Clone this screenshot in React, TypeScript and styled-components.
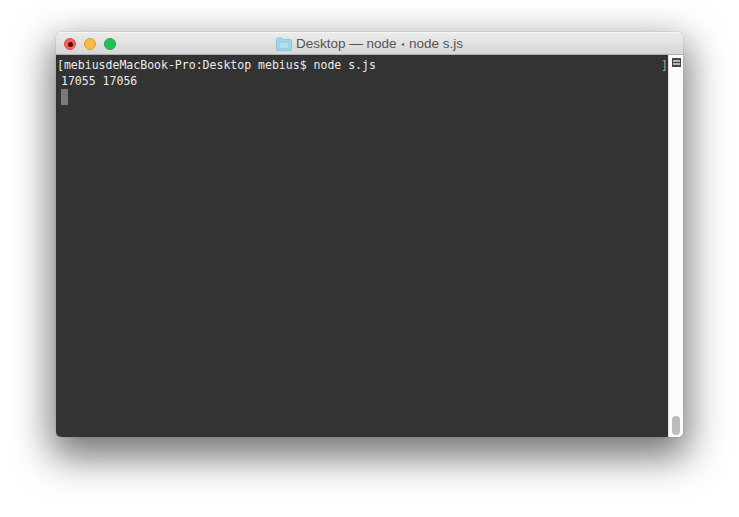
import React from "react";
import styled, { createGlobalStyle } from "styled-components";

const Global = createGlobalStyle`
  html, body {
    margin: 0;
    padding: 0;
    background: #fff;
    overflow: hidden;
  }
`;

const Page = styled.div`
  width: 739px;
  height: 517px;
  padding: 32px 56px 80px;
  box-sizing: border-box;
`;

const Window = styled.div`
  width: 627px;
  height: 405px;
  border-radius: 5px;
  overflow: hidden;
  display: flex;
  flex-direction: column;
  box-shadow: 0 0 1px rgba(0, 0, 0, 0.5), 0 15px 38px 5px rgba(0, 0, 0, 0.55);
`;

const TitleBar = styled.div`
  position: relative;
  height: 23px;
  flex: none;
  display: flex;
  align-items: center;
  justify-content: center;
  gap: 4px;
  background: linear-gradient(#ebebeb, #d6d6d6);
  border-top: 1px solid #f6f6f6;
  border-bottom: 1px solid #b0b0b0;
  box-sizing: border-box;
`;

const Lights = styled.div`
  position: absolute;
  left: 8px;
  top: 5px;
  display: flex;
  gap: 8px;
`;

const Light = styled.span<{ $color: string; $edge: string }>`
  width: 12px;
  height: 12px;
  border-radius: 50%;
  box-sizing: border-box;
  background: ${(p) => p.$color};
  border: 1px solid ${(p) => p.$edge};
  display: flex;
  align-items: center;
  justify-content: center;
`;

const CloseDot = styled.span`
  width: 5px;
  height: 5px;
  border-radius: 50%;
  background: #4d0606;
`;

const Title = styled.span`
  font-family: "Liberation Sans", Arial, sans-serif;
  font-size: 13.5px;
  color: #555;
  white-space: nowrap;
`;

const Arrow = styled.span`
  font-size: 6px;
  vertical-align: 2px;
  margin: 0 1px;
  color: #555;
`;

const Body = styled.div`
  flex: 1;
  display: flex;
  min-height: 0;
`;

const Terminal = styled.div`
  position: relative;
  flex: 1;
  background: #333333;
  padding: 2px 0 0 1px;
  font-family: "DejaVu Sans Mono", monospace;
  font-size: 11.53px;
  line-height: 16px;
  color: #ececec;
`;

const Line = styled.div<{ $indent?: boolean }>`
  height: 16px;
  white-space: pre;
  padding-left: ${(p) => (p.$indent ? "4px" : "0")};
`;

const Cursor = styled.div`
  width: 7px;
  height: 16px;
  margin-left: 4px;
  background: #7a7a7a;
`;

const RightBracket = styled.span`
  position: absolute;
  right: 0;
  top: 2px;
  color: #a8a8a8;
`;

const Scrollbar = styled.div`
  width: 15px;
  flex: none;
  background: #fbfbfb;
  border-left: 1px solid #e4e4e4;
  box-sizing: border-box;
  display: flex;
  flex-direction: column;
  justify-content: space-between;
  align-items: center;
  padding: 3px 0 2px;
`;

const SplitButton = styled.div`
  width: 9px;
  height: 9px;
  background: #474747;
  display: flex;
  flex-direction: column;
  justify-content: center;
  gap: 1px;
  padding: 0 1px;
  box-sizing: border-box;
`;

const SplitBar = styled.span`
  display: block;
  height: 2px;
  background: #b4b4b4;
`;

const Thumb = styled.div`
  width: 8px;
  height: 19px;
  border-radius: 4px;
  background: #bcbcbc;
`;

export default function App() {
  return (
    <>
      <Global />
      <Page>
        <Window>
          <TitleBar>
            <Lights>
              <Light $color="#f95f5a" $edge="#e24b47">
                <CloseDot />
              </Light>
              <Light $color="#fbb949" $edge="#e0a03c" />
              <Light $color="#1fc454" $edge="#1aab48" />
            </Lights>
            <svg width="16" height="14" viewBox="0 0 16 14">
              <path d="M0.5 2.5 Q0.5 1 2 1 H6 L7.5 2.5 H14 Q15.5 2.5 15.5 4 V12 Q15.5 13.5 14 13.5 H2 Q0.5 13.5 0.5 12 Z" fill="#a5d5ea" stroke="#8cc5de" />
              <rect x="3" y="5" width="10" height="6.5" fill="#b4deef" stroke="#85c0da" strokeWidth="0.6" />
            </svg>
            <Title>
              Desktop — node <Arrow>◂</Arrow> node s.js
            </Title>
          </TitleBar>
          <Body>
            <Terminal>
              <Line>[mebiusdeMacBook-Pro:Desktop mebius$ node s.js</Line>
              <Line $indent>17055 17056</Line>
              <Cursor />
              <RightBracket>]</RightBracket>
            </Terminal>
            <Scrollbar>
              <SplitButton>
                <SplitBar />
                <SplitBar />
              </SplitButton>
              <Thumb />
            </Scrollbar>
          </Body>
        </Window>
      </Page>
    </>
  );
}
